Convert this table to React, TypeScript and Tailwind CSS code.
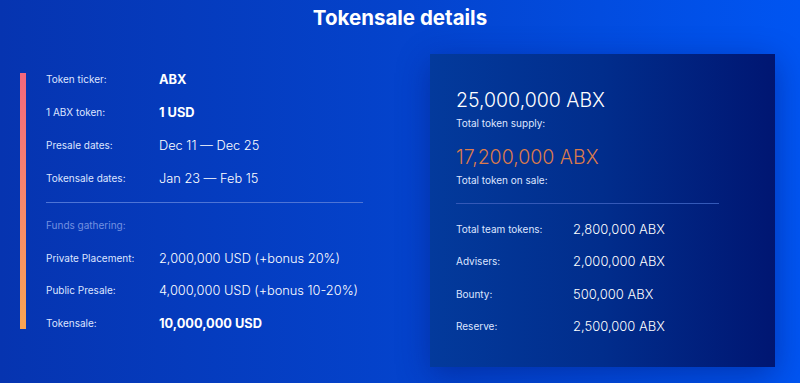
import React from 'react';

const leftRows = [
  { label: 'Token ticker:', value: 'ABX', bold: true },
  { label: '1 ABX token:', value: '1 USD', bold: true },
  { label: 'Presale dates:', value: 'Dec 11 — Dec 25' },
  { label: 'Tokensale dates:', value: 'Jan 23 — Feb 15' },
];

const fundRows = [
  { label: 'Private Placement:', value: '2,000,000 USD (+bonus 20%)' },
  { label: 'Public Presale:', value: '4,000,000 USD (+bonus 10-20%)' },
  { label: 'Tokensale:', value: '10,000,000 USD', bold: true },
];

const teamRows = [
  { label: 'Total team tokens:', value: '2,800,000 ABX' },
  { label: 'Advisers:', value: '2,000,000 ABX' },
  { label: 'Bounty:', value: '500,000 ABX' },
  { label: 'Reserve:', value: '2,500,000 ABX' },
];

function Row({ label, value, bold, h = 'h-[33px]' }: { label: string; value: string; bold?: boolean; h?: string }) {
  return (
    <div className={`flex items-center ${h}`}>
      <span className="w-[113px] text-[10px] text-[#dde5ff]">{label}</span>
      <span className={`text-[12.8px] text-white ${bold ? 'font-bold' : 'font-light'}`}>{value}</span>
    </div>
  );
}

export default function App() {
  return (
    <div className="w-[800px] h-[383px] overflow-hidden bg-[linear-gradient(90deg,#0634b0_0%,#0443cc_50%,#0055f2_100%)] font-['Inter',sans-serif]">
      {/* Title */}
      <h1 className="h-[36px] flex items-center justify-center text-[20.5px] font-bold text-white">
        Tokensale details
      </h1>

      <div className="flex mt-[18px]">
        {/* Left: basic info */}
        <div className="flex pl-[20px] pt-[9px] w-[410px]">
          <div className="w-[6px] h-[256px] mt-[10px] bg-gradient-to-b from-[#f2677d] to-[#f8a452]" />
          <div className="flex flex-col pl-[20px]">
            {leftRows.map((r) => (
              <Row key={r.label} {...r} />
            ))}
            <div className="mt-[7px] w-[317px] h-px bg-[#4d74d6]" />
            <div className="mt-[6px] h-[33px] flex items-center text-[10px] text-[#7391e0]">
              Funds gathering:
            </div>
            {fundRows.map((r) => (
              <Row key={r.label} {...r} h="h-[32.5px]" />
            ))}
          </div>
        </div>

        {/* Right: supply card */}
        <div className="ml-[20px] w-[345px] h-[313px] flex flex-col pl-[26px] pr-[56px] bg-[linear-gradient(90deg,#033a9c_0%,#012d8c_50%,#001672_100%)] shadow-[0_8px_30px_rgba(0,20,110,0.45)]">
          <div className="mt-[34px] leading-[24px] text-[19.5px] font-light text-white">25,000,000 ABX</div>
          <div className="mt-[4px] leading-[14px] text-[10px] text-[#dde5ff]">Total token supply:</div>
          <div className="mt-[15px] leading-[24px] text-[19.5px] font-light text-[#dc7b4c]">17,200,000 ABX</div>
          <div className="mt-[4px] leading-[14px] text-[10px] text-[#dde5ff]">Total token on sale:</div>
          <div className="mt-[16px] h-px bg-[#3459b8]" />
          <div className="mt-[9px] flex flex-col">
            {teamRows.map((r) => (
              <div key={r.label} className="flex items-center h-[32.5px]">
                <span className="w-[117px] text-[10px] text-[#dde5ff]">{r.label}</span>
                <span className="text-[13px] font-light text-white">{r.value}</span>
              </div>
            ))}
          </div>
        </div>
      </div>
    </div>
  );
}
